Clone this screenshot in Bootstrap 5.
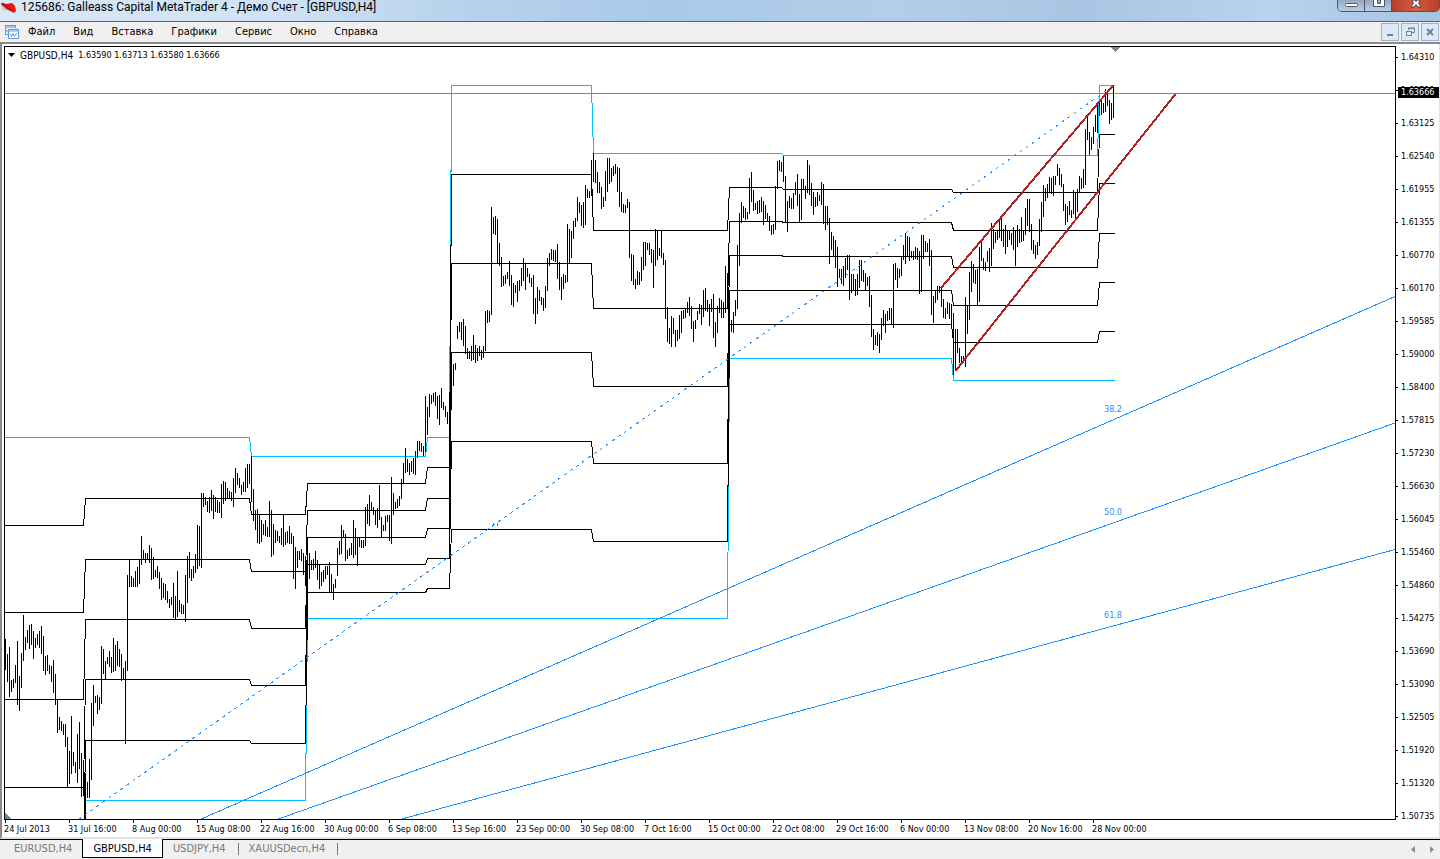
<!DOCTYPE html>
<html lang="ru">
<head>
<meta charset="utf-8">
<meta name="viewport" content="width=device-width, initial-scale=1">
<title>125686: Galleass Capital MetaTrader 4 - Демо Счет - [GBPUSD,H4]</title>
<link rel="stylesheet" href="https://cdn.jsdelivr.net/npm/bootstrap@5.3.0/dist/css/bootstrap.min.css">
<style>
  body { font-family: "DejaVu Sans Condensed", "DejaVu Sans", sans-serif; font-size: 11px; line-height: 14px; color: #000; background: #fff; }
  button { font: inherit; }
  .titlebar { height: 22px; border-bottom: 1px solid #54657b; background: linear-gradient(90deg, #d9e8f6 0, #cfe1f3 20%, #b7d2ed 32%, #a9c9e8 46%, #b2cee9 62%, #a8c5e3 75%, #b8d3ee 88%, #a6c3e2 100%); }
  .titlebar h1 { font: 12px/14px Roboto, sans-serif; }
  .titlebar svg { margin-left: 1px; }
  .titlebar .app-mark { margin-top: 2px; }
  .caption-btns { height: 12px; border: 1px solid #47566b; border-top: 0; border-radius: 0 0 5px 5px; overflow: hidden; }
  .caption-btns button { width: 27px; border: 0; padding: 0; background: linear-gradient(#93a9c3, #bccde0); border-right: 1px solid #47566b; }
  .caption-btns .btn-quit { width: 47px; border-right: 0; background: linear-gradient(90deg, #b5412c, #d9583a 50%, #b5412c); }
  .menubar { height: 22px; background: #f0f0f0; border-bottom: 2px solid #8a8a8a; }
  .menubar .menus { gap: 18px; margin-left: 9px; }
  .menubar a, .tabstrip a { color: inherit; text-decoration: none; }
  .mdi-btns { gap: 2px; margin-right: 1px; }
  .mdi-btn { width: 18px; height: 18px; padding: 0; border: 1px solid #9db0c4; background: #dce9f7; }
  .workspace { border-left: 2px solid #8c8c8c; border-right: 1px solid #e3e3e3; border-bottom: 2px solid #e3e3e3; padding: 2px 0 0 2px; min-height: 0; }
  .chart-grid { display: grid; grid-template-columns: minmax(0, 1fr) 43px; grid-template-rows: minmax(0, 1fr) 17px; }
  .plot { border: 1px solid #000; min-width: 0; }
  .plot > svg { display: block; width: 100%; height: 100%; }
  .quote { top: 2px; left: 3px; gap: 5px; line-height: 11px; }
  .quote .sym { font-size: 10px; }
  .tiny { font-size: 9px; line-height: 12px; }
  .price-axis { grid-row: 1 / 3; grid-column: 2; padding-top: 5px; min-height: 0; }
  .price-axis li { height: 33px; }
  .price-axis li::before { content: ""; width: 2px; height: 1px; margin: 6px 3px 0 0; background: #000; }
  .price-axis li:last-child { height: 12px; }
  .last-price { top: 41px; left: 2px; right: 0; padding-left: 3px; line-height: 11px; background: #000; color: #fff; }
  .time-axis { grid-row: 2; grid-column: 1; overflow: hidden; }
  .time-axis li { flex: 0 0 64px; white-space: nowrap; }
  .time-axis li::before { content: ""; display: block; width: 1px; height: 3px; margin-left: 1px; background: #000; }
  .tabstrip { height: 20px; background: #f0f0f0; border-top: 1px solid #000; color: #787878; padding-left: 4px; }
  .tabstrip a { padding: 1px 10px 0; line-height: 15px; }
  .tabstrip a.active { margin: -1px 0 1px; border: 1px solid #000; border-top: 0; background: #fff; color: #000; padding-top: 2px; }
  .tabstrip .sep { border-right: 1px solid #787878; height: 12px; margin: 3px 0 0 2px; }
  .tabstrip button { border: 0; padding: 0; background: none; width: 18px; }
</style>
</head>
<body class="d-flex flex-column vh-100 overflow-hidden">

<header class="titlebar d-flex flex-shrink-0 align-items-start">
  <svg class="app-mark" width="16" height="13" viewBox="0 0 16 13" aria-hidden="true">
    <path d="M0 1l5 1 6-1 3 3 1 5-2 2-4-2-4-2-3-3z" fill="#cf1f1c"/>
    <path d="M0 2l7 4 4 2M1 1l7 3 5 2" fill="none" stroke="#a80f10"/>
    <path d="M8 2.500h4l2 4v3l-5-2z" fill="#f2120f"/>
    <path d="M0 4l4 2M1 6l3 2" stroke="#e79a9a"/>
  </svg>
  <h1 class="m-0 ms-1 text-nowrap flex-grow-1">125686: Galleass Capital MetaTrader 4 - Демо Счет - [GBPUSD,H4]</h1>
  <div class="caption-btns d-flex">
    <button type="button" aria-label="Свернуть" class="d-flex justify-content-center"><svg width="13" height="8"><rect x=".5" y="3.500" width="12" height="3" rx="1" fill="#fff" stroke="#4c5566"/></svg></button>
    <button type="button" aria-label="Развернуть" class="d-flex justify-content-center"><svg width="12" height="8"><path d="M.5 0v6.500h11V0" fill="#fff" stroke="#4c5566"/><path d="M4.500 0v3.500h3V0" fill="#93a9c3" stroke="#4c5566"/></svg></button>
    <button type="button" aria-label="Закрыть" class="btn-quit d-flex justify-content-center"><svg width="12" height="8"><path d="M1 7l2.500-4L2 0h3l1 1.500L7 0h3L8.500 3 11 7H8L6 4.500 4 7z" fill="#fff" stroke="#4c4550"/></svg></button>
  </div>
</header>

<nav class="menubar d-flex flex-shrink-0 align-items-center">
  <svg class="ms-1" width="15" height="16" viewBox="0 0 15 16" fill="none" stroke="#5b97dc" aria-hidden="true">
    <path d="M11.500 4V1.500h-10v9H4M1 3h11" />
    <path d="M4.500 5.500h10v9h-10zM4 7h11" fill="#fff"/>
    <path d="M6 9.500l1.500 3 1.500-3 1.500 3 2-3M3 6v2"/>
  </svg>
  <div class="menus d-flex flex-grow-1">
    <a href="#">Файл</a><a href="#">Вид</a><a href="#">Вставка</a><a href="#">Графики</a><a href="#">Сервис</a><a href="#">Окно</a><a href="#">Справка</a>
  </div>
  <div class="mdi-btns d-flex">
    <button type="button" class="mdi-btn d-flex align-items-center justify-content-center" aria-label="Свернуть окно"><svg width="10" height="10"><path d="M2 8h6" stroke="#6f8193" stroke-width="2"/></svg></button>
    <button type="button" class="mdi-btn d-flex align-items-center justify-content-center" aria-label="Восстановить окно"><svg width="10" height="10" fill="none" stroke="#6f8193"><path d="M3.500 3V1.500h6v4H7M3 1h7M1.500 4.500h5v4h-5zM1 4.500h6"/></svg></button>
    <button type="button" class="mdi-btn d-flex align-items-center justify-content-center" aria-label="Закрыть окно"><svg width="10" height="10"><path d="M2 2l6 6M8 2l-6 6" stroke="#6f8193" stroke-width="2"/></svg></button>
  </div>
</nav>

<main class="workspace flex-grow-1 d-flex">
  <div class="chart-grid flex-grow-1">
    <section class="plot position-relative">
      <svg role="img" aria-label="GBPUSD,H4">
        <g transform="translate(-5 -47)" fill="none" shape-rendering="crispEdges">
          <path d="M5 93.500H2600" stroke="#778899"/>
          <g id="bands" stroke="#00bfff"></g>
          <g id="levels" stroke="#000"></g>
          <path id="bars" stroke="#000"/>
          <path d="M200 819.500L1395 296.500M277 819.500L1395 423M400 819.500L1395 549.500" stroke="#1e90ff"/>
          <path d="M78.500 819.500L1113.500 85.500" stroke="#1e90ff" stroke-dasharray="3 4.350"/>
          <path d="M493.500 523v3M497.500 523v3" stroke="#1e90ff"/>
          <path d="M941 288L1113.500 85M955.500 371L1175.500 94" stroke="#b22222" stroke-width="2"/>
          <path d="M1114.500 91v3M1115.500 96v2" stroke="#ffee00"/>
          <path d="M1111 47h9l-4.500 5zM5 813l6 6H5z" fill="#778899"/>
          <g fill="#1e90ff" class="tiny"><text x="1104" y="412">38.2</text><text x="1104" y="515">50.0</text><text x="1104" y="618">61.8</text></g>
        </g>
      </svg>
      <div class="quote position-absolute d-flex align-items-center text-nowrap">
        <svg width="7" height="5"><path d="M0 0h7L3.500 4z"/></svg>
        <span class="sym">GBPUSD,H4</span>
        <span class="tiny">1.63590 1.63713 1.63580 1.63666</span>
      </div>
    </section>
    <div class="price-axis position-relative">
      <ol id="prices" class="list-unstyled m-0 tiny"></ol>
      <div class="last-price position-absolute tiny">1.63666</div>
    </div>
    <ol id="times" class="time-axis list-unstyled d-flex m-0 tiny"></ol>
  </div>
</main>

<nav class="tabstrip d-flex flex-shrink-0">
  <a href="#">EURUSD,H4</a>
  <a href="#" class="active">GBPUSD,H4</a>
  <a href="#">USDJPY,H4</a><span class="sep"></span>
  <a href="#">XAUUSDecn,H4</a><span class="sep"></span>
  <span class="flex-grow-1"></span>
  <button type="button" aria-label="Влево"><svg width="5" height="7"><path d="M4 0v7L0 3.500z" fill="#8c8c8c"/></svg></button>
  <button type="button" aria-label="Вправо"><svg width="5" height="7"><path d="M1 0v7l4-3.500z" fill="#8c8c8c"/></svg></button>
</nav>

<script src="https://cdn.jsdelivr.net/npm/bootstrap@5.3.0/dist/js/bootstrap.bundle.min.js"></script>
<script>
  const $ = id => document.getElementById(id);
  const list = (id, items) => { $(id).innerHTML = items.map(t => `<li class="${id === 'prices' ? 'd-flex' : ''}">${t}</li>`).join(''); };
  list('prices', '1.64310 1.63710 1.63125 1.62540 1.61955 1.61355 1.60770 1.60170 1.59585 1.59000 1.58400 1.57815 1.57230 1.56630 1.56045 1.55460 1.54860 1.54275 1.53690 1.53090 1.52505 1.51920 1.51320 1.50735'.split(' '));
  list('times', ['24 Jul 2013','31 Jul 16:00','8 Aug 00:00','15 Aug 08:00','22 Aug 16:00','30 Aug 00:00','6 Sep 08:00','13 Sep 16:00','23 Sep 00:00','30 Sep 08:00','7 Oct 16:00','15 Oct 00:00','22 Oct 08:00','29 Oct 16:00','6 Nov 00:00','13 Nov 08:00','20 Nov 16:00','28 Nov 00:00']);

  // High-low range of each H4 bar, one bar every 2px
  const ranges = `639-670 654-682 647-697 680-692 679-688 665-683 641-705 676-711 653-688 615-661 637-650 630-643 625-649 624-645 631-659 638-648 634-645 631-648 626-654 636-671 656-675 655-671 665-674 666-682 660-693 674-705 700-733 717-730 721-731 724-735 724-747 737-787 751-784 716-774 752-766 762-773 734-783 722-769 753-797 760-796
773-819 782-798 759-798 703-780 685-726 696-703 695-714 697-710 646-704 649-674 661-679 657-664 651-667 657-673 638-672 645-671 641-666 649-667 654-681 668-679 661-744 575-671 559-587 576-587 578-587 571-587 567-587 560-584 536-565 550-560 553-563 553-559 545-563 548-580 557-579 570-577 566-578 572-589 578-600 583-598
584-600 591-603 599-608 597-605 583-618 596-619 571-617 600-612 604-614 605-614 575-622 556-603 552-578 569-581 566-578 554-573 525-569 526-566 493-568 493-507 497-505 501-512 497-513 490-511 495-519 497-512 500-513 502-513 484-518 481-504 482-501 488-499 491-498 492-501 478-507 468-493 473-485 478-488 485-495 482-492
468-492 464-488 464-484 456-502 489-521 510-530 509-543 515-544 520-542 524-535 520-536 527-537 501-537 510-557 524-555 530-543 531-541 536-543 528-545 515-547 532-545 531-543 526-544 533-544 536-579 547-589 551-568 551-560 549-561 553-575 560-586 537-640 553-579 560-570 559-570 551-568 560-580 565-589 572-586 570-582
566-579 566-575 562-592 574-592 584-600 579-588 548-576 541-555 525-554 530-537 534-561 550-559 548-556 543-555 520-558 528-555 537-566 538-547 540-548 540-548 507-546 504-524 495-526 502-510 507-515 510-525 508-528 485-520 517-537 525-531 516-531 515-522 515-541 477-544 493-515 502-509 499-508 496-506 479-499 463-483
448-473 459-472 463-475 461-472 458-474 451-475 441-458 441-451 443-452 446-456 396-452 407-435 394-417 395-404 393-402 392-406 396-419 395-425 388-408 402-410 406-417 412-424 394-528 352-410 364-386 363-370 326-339 322-332 322-340 319-346 326-354 348-359 351-359 346-361 335-360 345-363 348-361 346-356 350-360 346-358
311-351 310-323 311-322 207-315 217-234 216-235 219-263 243-266 257-287 276-286 275-284 272-279 261-286 275-305 283-307 285-293 281-302 280-291 268-286 258-281 264-290 268-277 274-283 278-287 275-314 298-324 287-314 290-301 297-305 298-311 286-308 258-291 253-266 249-260 250-261 250-262 244-279 262-290 277-300 274-289
275-283 224-282 229-263 231-258 221-239 218-227 197-221 202-213 205-226 202-228 185-225 189-198 191-198 160-196 153-182 160-183 172-193 182-193 187-209 197-207 171-201 158-192 158-184 168-182 166-176 164-174 167-192 168-207 192-212 204-213 205-213 199-208 202-258 254-281 255-285 279-289 271-285 272-285 257-281 242-270
242-266 243-250 243-255 249-263 250-288 229-266 231-260 248-256 231-258 253-265 260-319 307-342 328-344 316-347 318-334 330-347 330-341 315-339 311-333 310-319 308-318 302-313 297-316 306-329 321-342 320-329 311-320 304-314 305-325 290-317 288-311 300-312 304-326 299-312 294-338 322-347 306-333 298-313 300-318 302-318
266-313 273-308 290-378 320-332 312-333 300-316 245-309 213-266 202-223 206-218 208-220 212-219 178-214 172-202 190-211 203-210 201-214 200-213 197-212 201-225 205-219 213-221 216-231 225-235 224-234 186-230 161-189 160-171 162-172 156-182 176-222 201-232 196-208 198-209 193-209 182-195 174-206 194-222 179-220 179-189
186-199 160-193 165-195 183-206 192-215 197-207 192-206 195-201 182-205 184-224 206-230 206-225 218-264 232-250 236-256 240-268 247-287 269-278 269-284 266-286 258-278 255-270 255-300 274-293 274-290 279-296 274-295 260-288 260-281 270-282 273-290 277-286 276-307 295-337 329-350 335-345 332-346 334-353 318-340 310-326
314-333 311-321 308-320 308-325 264-328 263-280 268-288 269-278 256-276 245-260 233-264 236-256 237-261 251-258 251-260 247-259 248-260 251-294 235-292 235-259 241-252 243-252 239-266 250-315 296-323 290-303 286-300 286-293 288-307 299-318 308-319 302-314 303-319 304-327 313-375 329-370 329-353 348-363 356-362 356-362
297-367 305-334 272-320 261-292 264-283 270-284 269-305 247-302 242-261 258-270 262-271 251-262 248-272 223-266 229-249 232-243 231-240 220-238 217-241 229-247 225-254 231-247 230-240 233-245 227-250 230-266 225-247 229-243 217-242 230-241 208-235 199-226 199-232 224-250 240-254 245-259 242-255 219-246 202-232 185-217
188-201 184-198 177-193 178-194 176-196 176-185 164-176 168-185 174-187 184-211 204-225 206-222 201-215 210-218 190-214 192-219 189-212 176-192 178-189 169-188 129-185 117-140 132-155 137-150 127-144 115-132 102-133 101-116 98-115 103-113 89-112 92-106 100-124 103-120 87-118`.trim().split(/\s+/);
  $('bars').setAttribute('d', ranges.map((r, i) => { const [h, l] = r.split('-'); return `M${5.5 + i * 2} ${h}V${l}`; }).join(''));

  // Stepped levels: y value per segment; each step spans 2px
  const steps = [5, 83, 249, 305, 425, 449, 591, 727, 781, 951, 1097];
  const stepPath = ys => ys.map((y, i) => {
    const x0 = i ? steps[i] + 2.5 : 5;
    const x1 = i < ys.length - 1 ? steps[i + 1] + 0.5 : 1115;
    return `${i ? 'L' : 'M'}${x0} ${y + 0.5}L${x1} ${y + 0.5}`;
  }).join('');
  const draw = (id, rows) => { $(id).innerHTML = rows.map(r => `<path d="${stepPath(r)}"/>`).join(''); };
  draw('bands', [
    [437, 437, 456, 456, 437, 85, 153, 153, 155, 155, 85],
    [900, 800, 800, 618, 618, 618, 618, 358, 358, 380, 380]
  ]);
  draw('levels', [
    [525, 498, 514, 483, 467, 174, 230, 187, 189, 192, 134],
    [612, 559, 571, 510, 498, 263, 308, 221, 222, 230, 183],
    [699, 619, 628, 537, 528, 352, 386, 255, 256, 267, 233],
    [787, 679, 685, 564, 558, 441, 463, 290, 290, 305, 282],
    [870, 740, 743, 592, 588, 529, 541, 324, 324, 342, 331]
  ]);
</script>
</body>
</html>
